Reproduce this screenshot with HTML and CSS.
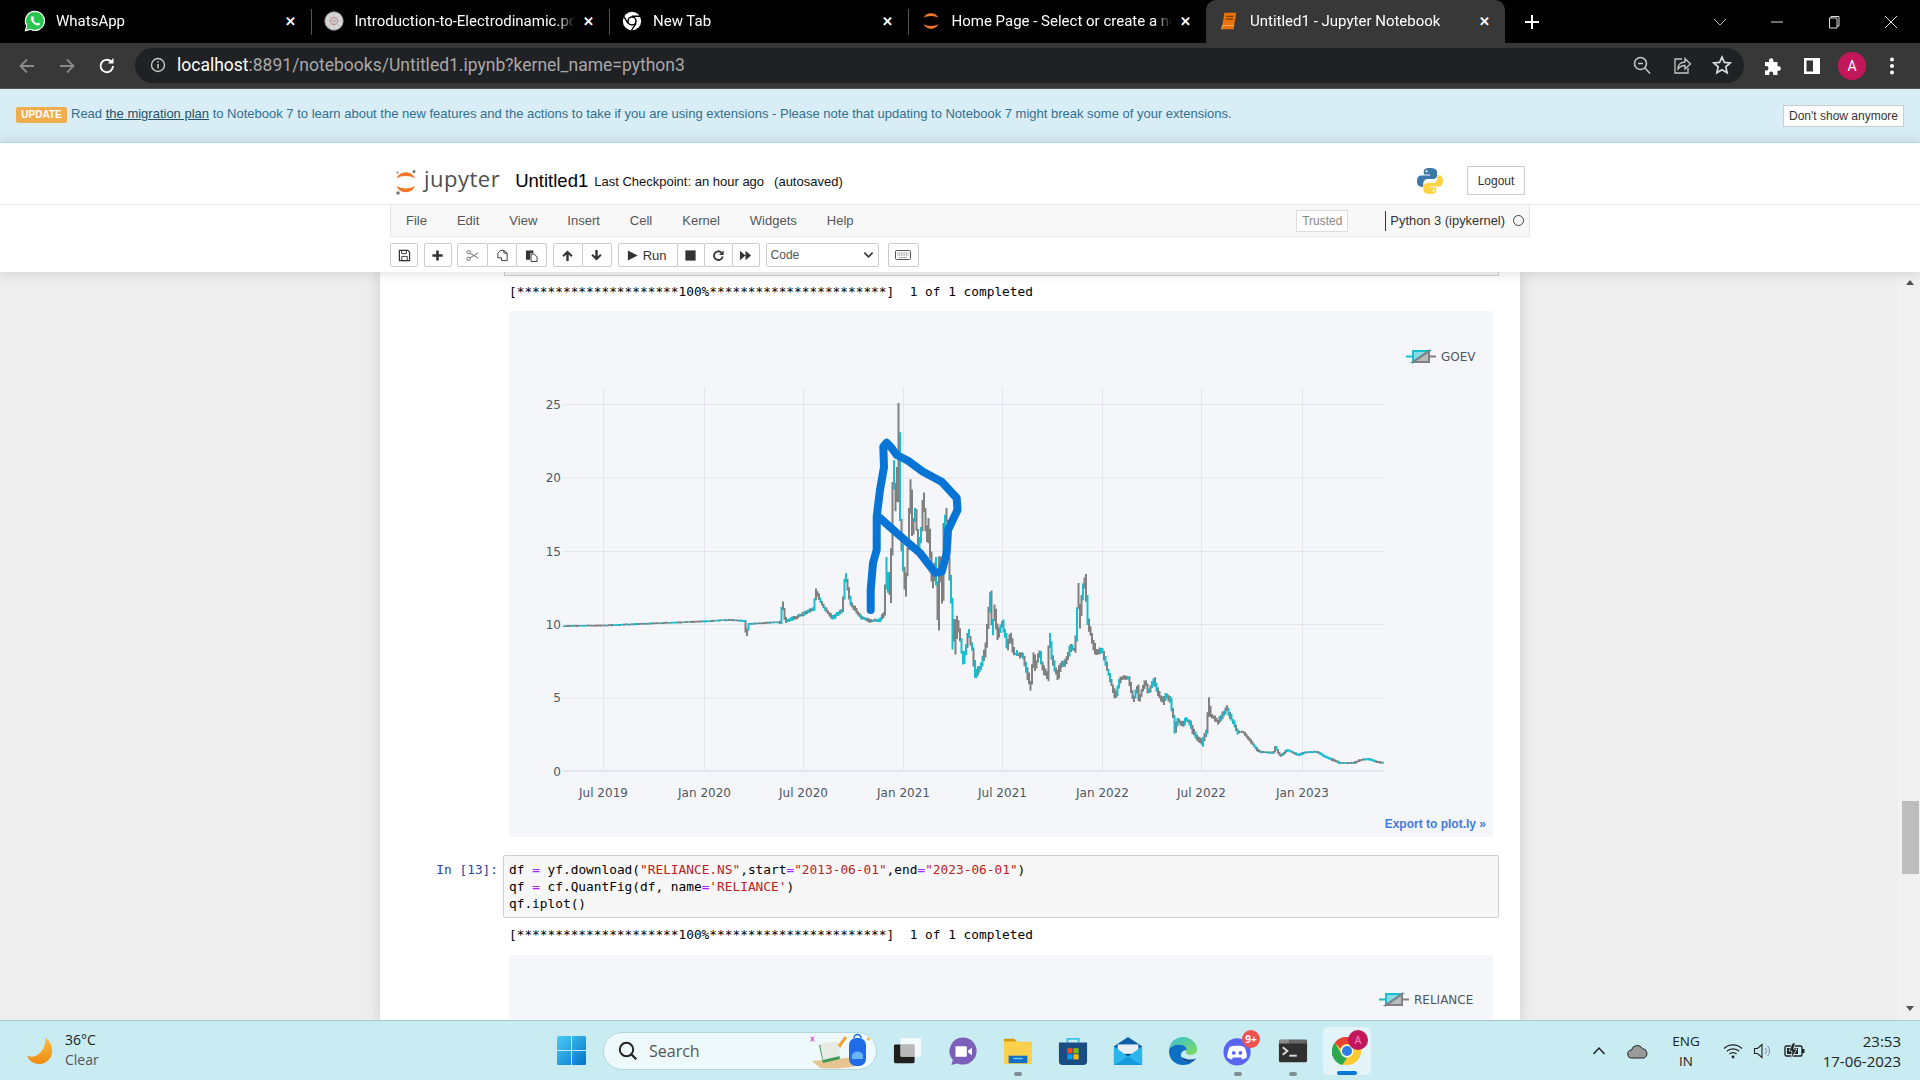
FILE: index.html
```html
<!DOCTYPE html>
<html lang="en">
<head>
  <meta charset="UTF-8" />
  <title>Untitled1 - Jupyter Notebook</title>
  <link rel="stylesheet" href="styles.css">
</head>
<body>
  <div class="tabstrip">
    <div class="tab">
      <svg class="tab-icon" viewBox="0 0 24 24"><path d="M12 1.5a10.4 10.4 0 0 0-9 15.6L1.6 22.500l5.500-1.400A10.400 10.400 0 1 0 12 1.500z" fill="#29c64f" stroke="#fff" stroke-width="1.300"/><path d="M8.800 6.800c-.5 0-1.300.8-1.400 2-.1 2.200 1.400 4.500 3.400 6.200 2 1.600 3.800 2.300 5 1.900 1-.3 1.800-1.300 1.700-2.100l-2.400-1.300-1.200 1.200c-1.500-.6-3-2-3.800-3.700l1-1.200-1-2.800z" fill="#fff"/></svg>
      <span class="tab-title">WhatsApp</span>
      <span class="tab-close">&#x2715;</span>
    </div>
    <div class="tab sep">
      <svg class="tab-icon" viewBox="0 0 24 24"><circle cx="12" cy="12" r="10" fill="#d8d8d8" stroke="#999"/><circle cx="12" cy="12" r="4" fill="none" stroke="#c77" stroke-width="1"/><path d="M12 4v16M4 12h16M6 6l12 12M18 6L6 18" stroke="#aaa" stroke-width=".6"/></svg>
      <span class="tab-title">Introduction-to-Electrodinamic.pdf</span>
      <span class="tab-close">&#x2715;</span>
    </div>
    <div class="tab sep">
      <svg class="tab-icon" viewBox="0 0 24 24"><circle cx="12" cy="12" r="10" fill="#fff"/><circle cx="12" cy="12" r="5.200" fill="#000"/><circle cx="12" cy="12" r="3.500" fill="#fff"/><path d="M12 6.800h9M7.500 14.600L3 7M16.500 14.600L11.500 22" stroke="#000" stroke-width="1.400"/></svg>
      <span class="tab-title">New Tab</span>
      <span class="tab-close">&#x2715;</span>
    </div>
    <div class="tab sep">
      <svg class="tab-icon" viewBox="0 0 24 24"><path d="M4 8.500a9 9 0 0 1 16 0a11 6 0 0 0-16 0zM4 15.500a9 9 0 0 0 16 0a11 6 0 0 1-16 0z" fill="#f37726"/></svg>
      <span class="tab-title">Home Page - Select or create a notebook</span>
      <span class="tab-close">&#x2715;</span>
    </div>
    <div class="tab active">
      <svg class="tab-icon" viewBox="0 0 24 24"><path d="M7 3h13l-3 18H4z" fill="#e8730c"/><path d="M9 7h8M8.500 10h8" stroke="#7a3c00" stroke-width="1.200"/><path d="M4 21l.8-4h12.500" fill="none" stroke="#ffb060" stroke-width="1"/></svg>
      <span class="tab-title">Untitled1 - Jupyter Notebook</span>
      <span class="tab-close">&#x2715;</span>
    </div>
    <svg class="new-tab" viewBox="0 0 16 16"><path d="M8 1v14M1 8h14" stroke="#fff" stroke-width="2"/></svg>
    <div class="window-controls">
      <svg viewBox="0 0 14 14"><path d="M1 4l6 6 6-6" fill="none" stroke="#bbb"/></svg>
      <svg viewBox="0 0 14 14"><path d="M1 7h12" stroke="#ddd" stroke-width="1"/></svg>
      <svg viewBox="0 0 14 14"><path d="M4 3V1.500h8V11h-2M2.500 3h7.500v10H2.500z" fill="none" stroke="#ddd"/></svg>
      <svg viewBox="0 0 14 14"><path d="M1 1l12 12M13 1L1 13" stroke="#ddd"/></svg>
    </div>
  </div>

  <div class="addressbar">
    <div class="nav-buttons">
      <svg viewBox="0 0 20 20"><path d="M17 10H4M10 3.500L3.500 10l6.500 6.500" fill="none" stroke="#8a8a8a" stroke-width="1.800"/></svg>
      <svg viewBox="0 0 20 20"><path d="M3 10h13M10 3.500l6.500 6.500-6.500 6.500" fill="none" stroke="#8a8a8a" stroke-width="1.800"/></svg>
      <svg viewBox="0 0 20 20"><path d="M16 10a6.200 6.200 0 1 1-1.800-4.400" fill="none" stroke="#fff" stroke-width="1.900"/><path d="M16.500 2v5.500H11z" fill="#fff"/></svg>
    </div>
    <div class="omnibox">
      <svg class="info" viewBox="0 0 16 16"><circle cx="8" cy="8" r="6.500" fill="none" stroke="#c4c7c5" stroke-width="1.400"/><path d="M8 7v4.500M8 4.300v1.500" stroke="#c4c7c5" stroke-width="1.500"/></svg>
      <span class="url"><b>localhost</b>:8891/notebooks/Untitled1.ipynb?kernel_name=python3</span>
      <div class="omni-actions">
        <svg viewBox="0 0 20 20"><circle cx="8.500" cy="8.500" r="6" fill="none" stroke="#c4c7c5" stroke-width="1.600"/><path d="M13 13l5 5.500M6 8.500h5" stroke="#c4c7c5" stroke-width="1.600"/></svg>
        <svg viewBox="0 0 20 20"><path d="M10 4H3v14h13v-5" fill="none" stroke="#c4c7c5" stroke-width="1.300"/><path d="M6 14c0-5 3-7 7-7V3.500l5.500 5.500-5.500 5v-3.500c-3 0-5 1-7 3.500z" fill="none" stroke="#c4c7c5" stroke-width="1.300"/></svg>
        <svg viewBox="0 0 20 20"><path d="M10 2l2.400 5.400 5.800.6-4.400 3.900 1.300 5.800-5.100-3-5.100 3 1.300-5.800L1.800 8l5.800-.6z" fill="none" stroke="#d8dadb" stroke-width="1.700"/></svg>
      </div>
    </div>
    <div class="browser-actions">
      <svg viewBox="0 0 20 20"><path d="M3 6h4V4.500a2.200 2.200 0 0 1 4.400 0V6h4.100v4.300h1.200a2.200 2.200 0 0 1 0 4.400h-1.200V19h-4.300v-1.500a2 2 0 0 0-4 0V19H3v-4.500h1.300a2.200 2.200 0 0 0 0-4.400H3z" fill="#fff"/></svg>
      <svg viewBox="0 0 20 20"><path d="M2 2h16v16H2z" fill="#fff"/><path d="M4.500 4.500h6.500v11H4.500z" fill="#333"/></svg>
      <span class="avatar">A</span>
      <svg viewBox="0 0 20 20"><circle cx="10" cy="3.500" r="2" fill="#fff"/><circle cx="10" cy="10" r="2" fill="#fff"/><circle cx="10" cy="16.500" r="2" fill="#fff"/></svg>
    </div>
  </div>

  <div class="update-banner">
    <span class="badge">UPDATE</span>
    <span class="banner-text">Read <a>the migration plan</a> to Notebook 7 to learn about the new features and the actions to take if you are using extensions - Please note that updating to Notebook 7 might break some of your extensions.</span>
    <button class="dismiss">Don't show anymore</button>
  </div>

  <div class="header">
    <div class="brand-row">
      <div class="brand-inner">
        <svg class="jp-mark" viewBox="0 0 24 30">
          <path d="M2.500 11.500a10 10 0 0 1 18.500 0a11.500 6 0 0 0-18.500 0zM2.500 19a10 10 0 0 0 18.500 0a11.500 6 0 0 1-18.500 0z" fill="#f37726"/>
          <circle cx="20" cy="4.500" r="1.500" fill="#767677"/><circle cx="3.500" cy="5.500" r="1" fill="#767677"/><circle cx="4" cy="26" r="1.800" fill="#767677"/>
        </svg>
        <span class="jp-word">jupyter</span>
        <span class="nb-name">Untitled1</span>
        <span class="checkpoint">Last Checkpoint: an hour ago</span>
        <span class="checkpoint saved">(autosaved)</span>
        <svg class="py-logo" viewBox="0 0 28 28">
          <path d="M13.800 1c-6 0-6 2.500-6 3.500V7.500h6.300v1H5C2.500 8.500 1 10.500 1 14c0 3.800 1.500 5.700 4 5.700h2.300v-3.200c0-2.500 2.200-4.500 4.500-4.500h5.700c2 0 3.500-1.600 3.500-3.500V4.500C20.500 2.500 18.500 1 13.800 1z" fill="#3b77a8"/>
          <path d="M14.200 27c6 0 6-2.500 6-3.500v-3h-6.300v-1H23c2.500 0 4-2 4-5.500 0-3.800-1.500-5.700-4-5.700h-1.800v3.200c0 2.500-2.200 4.500-4.500 4.500h-5.700c-2 0-3.500 1.600-3.500 3.500v4c0 2 2.500 3.500 6.700 3.500z" fill="#fdd445"/>
          <circle cx="10.500" cy="4.300" r="1.100" fill="#fff"/><circle cx="17.500" cy="23.700" r="1.100" fill="#fff"/>
        </svg>
        <button class="logout">Logout</button>
      </div>
    </div>
    <div class="menubar">
      <a>File</a><a>Edit</a><a>View</a><a>Insert</a><a>Cell</a><a>Kernel</a><a>Widgets</a><a>Help</a>
      <span class="trusted">Trusted</span>
      <span class="kernel-name">Python 3 (ipykernel)</span>
      <span class="kernel-dot"></span>
    </div>
    <div class="toolbar">
      <div class="btn-group"><button class="tool"><svg viewBox="0 0 14 14"><path d="M1.500 1.500h9l2 2v9h-11z" fill="none" stroke="#333" stroke-width="1.300"/><path d="M4 1.500h5v3.500H4zM4 8h6v4.500H4z" fill="none" stroke="#333"/></svg></button></div>
      <div class="btn-group"><button class="tool"><svg viewBox="0 0 14 14"><path d="M7 1.500v11M1.500 7h11" stroke="#333" stroke-width="2.800"/></svg></button></div>
      <div class="btn-group">
        <button class="tool wide"><svg viewBox="0 0 14 14"><circle cx="2.800" cy="3.500" r="1.800" fill="none" stroke="#666"/><circle cx="2.800" cy="10.500" r="1.800" fill="none" stroke="#666"/><path d="M4.300 4.500l9 5.500M4.300 9.500l9-5.500" stroke="#666"/></svg></button>
        <button class="tool wide"><svg viewBox="0 0 14 14"><path d="M5 1.500h3.500v3H12v8H6v-3H2V4.500z" fill="none" stroke="#333"/><path d="M8.500 1.500L12 4.500" stroke="#333"/></svg></button>
        <button class="tool wide"><svg viewBox="0 0 14 14"><path d="M1 1.500h8v3H5.500v7H1z" fill="#333"/><path d="M6.500 5.500H10l3 3v5H6.500z" fill="#fff" stroke="#333"/></svg></button>
      </div>
      <div class="btn-group">
        <button class="tool move"><svg viewBox="0 0 14 14"><path d="M7 1.500L1.500 7l1.500 1.500L5.700 6v7h2.600V6l2.700 2.500L12.500 7z" fill="#333"/></svg></button>
        <button class="tool move"><svg viewBox="0 0 14 14"><path d="M7 12.500L1.500 7 3 5.500 5.700 8V1h2.600v7L11 5.500 12.500 7z" fill="#333"/></svg></button>
      </div>
      <div class="btn-group">
        <button class="tool run"><svg viewBox="0 0 14 14"><path d="M2 1.500l10.500 5.500L2 12.500z" fill="#333"/></svg>Run</button>
        <button class="tool exec"><svg viewBox="0 0 14 14"><path d="M1.500 1.500h11v11h-11z" fill="#333"/></svg></button>
        <button class="tool exec"><svg viewBox="0 0 14 14"><path d="M11.500 8a4.700 4.700 0 1 1-1.300-4.200" fill="none" stroke="#333" stroke-width="1.900"/><path d="M12.500 1.500V6.500H7.500z" fill="#333"/></svg></button>
        <button class="tool exec"><svg viewBox="0 0 14 14"><path d="M1 2l6 5-6 5zM7 2l6 5-6 5z" fill="#333"/></svg></button>
      </div>
      <div class="cell-type">Code<svg viewBox="0 0 12 8"><path d="M1.500 1.500L6 6l4.500-4.500" fill="none" stroke="#333" stroke-width="1.800"/></svg></div>
      <button class="tool keyboard"><svg viewBox="0 0 16 12"><rect x=".5" y="1.500" width="15" height="9" rx="1" fill="none" stroke="#555"/><path d="M2.500 4h11M2.500 6h11M4 8.500h8" stroke="#777" stroke-dasharray="1 .7"/></svg></button>
    </div>
  </div>

  <div class="site">
    <div class="notebook">
      <div class="cell-tail"></div>
      <pre class="stream">[*********************100%***********************]  1 of 1 completed</pre>
      <div class="plot">
        <svg id="chart" class="plot-svg" viewBox="509 311 984 526" width="984" height="526">
          <g class="grid">
            <path d="M563 404.500H1384M563 478H1384M563 551.500H1384M563 624.500H1384M563 698H1384"/>
            <path d="M603.500 387V771M704.500 387V771M803.500 387V771M903.500 387V771M1002.500 387V771M1102.500 387V771M1201.500 387V771M1302.500 387V771"/>
            <path class="zero" d="M563 771H1384"/>
          </g>
          <path id="candlesGray" class="candles gray"/>
          <path id="candlesTeal" class="candles teal"/>
          <g class="ticks y">
            <text x="561" y="408.500">25</text><text x="561" y="482">20</text><text x="561" y="555.500">15</text><text x="561" y="628.500">10</text><text x="561" y="702">5</text><text x="561" y="775.500">0</text>
          </g>
          <g class="ticks x">
            <text x="603.500" y="797">Jul 2019</text><text x="704.500" y="797">Jan 2020</text><text x="803.500" y="797">Jul 2020</text><text x="903.500" y="797">Jan 2021</text><text x="1002.500" y="797">Jul 2021</text><text x="1102.500" y="797">Jan 2022</text><text x="1201.500" y="797">Jul 2022</text><text x="1302.500" y="797">Jan 2023</text>
          </g>
          <g class="legend-key" transform="translate(1406 350)">
            <path class="up-line" d="M0 6.500h7"/><path class="down-line" d="M23 6.500h7"/>
            <path class="up-fill" d="M7 1h16L7 12z"/><path class="down-fill" d="M23 1v11H7z"/>
          </g>
          <text class="legend-label" x="1441" y="360.500">GOEV</text>
          <text class="export" x="1486" y="828">Export to plot.ly »</text>
          <path class="ink" d="M870.700 610L870.700 590L873 563L876.700 550L876.700 516.700L880 490L884 467L883.300 446.700L886.700 442.700L891.700 448L896.700 455L908 460.700L923 471.700L941.700 481.700L956.700 498L957.500 510L948 530L946.700 553L941.700 571.700L935 572.700L920 553L896.700 533L880 518"/>
        </svg>
      </div>
      <div class="code-cell">
        <div class="prompt">In [13]:</div>
        <pre class="code"><span class="nm">df</span> <span class="op">=</span> yf.download(<span class="str">"RELIANCE.NS"</span>,start<span class="op">=</span><span class="str">"2013-06-01"</span>,end<span class="op">=</span><span class="str">"2023-06-01"</span>)
qf <span class="op">=</span> cf.QuantFig(df, name<span class="op">=</span><span class="str">'RELIANCE'</span>)
qf.iplot()</pre>
      </div>
      <pre class="stream second">[*********************100%***********************]  1 of 1 completed</pre>
      <div class="plot short">
        <svg class="plot-svg" viewBox="509 955 984 66" width="984" height="66">
          <g class="legend-key" transform="translate(1379 993)">
            <path class="up-line" d="M0 6.500h7"/><path class="down-line" d="M23 6.500h7"/>
            <path class="up-fill" d="M7 1h16L7 12z"/><path class="down-fill" d="M23 1v11H7z"/>
          </g>
          <text class="legend-label" x="1414" y="1003.500">RELIANCE</text>
        </svg>
      </div>
    </div>
    <div class="scrollbar">
      <span class="arrow up"></span>
      <span class="thumb"></span>
      <span class="arrow down"></span>
    </div>
  </div>

  <div class="taskbar">
    <div class="weather">
      <svg class="moon" viewBox="0 0 30 32"><defs><linearGradient id="moonFill" x1="0" y1="0" x2="0" y2="1"><stop offset="0" stop-color="#fbbf3a"/><stop offset="1" stop-color="#ee8a12"/></linearGradient></defs><path d="M20 2c4 4 7 8 7 14 0 8-6 14-13 14-6 0-11-3-13-9 3 2 7 2 10 0 6-3 10-11 9-19z" fill="url(#moonFill)"/></svg>
      <div class="weather-text"><span class="temp">36°C</span><span class="cond">Clear</span></div>
    </div>
    <svg class="start" viewBox="0 0 29 29"><defs><linearGradient id="winFill" x1="0" y1="0" x2="1" y2="1"><stop offset="0" stop-color="#4bcdf6"/><stop offset="1" stop-color="#0372c9"/></linearGradient></defs><path d="M0 1.500A1.500 1.500 0 0 1 1.500 0H14v14H0zM15 0h12.500A1.500 1.500 0 0 1 29 1.500V14H15zM0 15h14v14H1.500A1.500 1.500 0 0 1 0 27.500zM15 15h14v12.500a1.500 1.500 0 0 1-1.500 1.500H15z" fill="url(#winFill)"/></svg>
    <div class="searchbox">
      <svg viewBox="0 0 20 20"><circle cx="8.500" cy="8.500" r="6.700" fill="none" stroke="#222" stroke-width="2"/><path d="M13.300 13.300l5 5" stroke="#222" stroke-width="2.200"/></svg>
      <span>Search</span>
      <svg class="search-art" viewBox="0 0 60 36"><path d="M2 28l46-4 6 6c-10 6-36 6-44 5z" fill="#e6c492"/><path d="M9 12l18-3 3 17-17 4z" fill="#3d9a55"/><path d="M10 11l17-3 3 15-17 4z" fill="#e8ebe4"/><path d="M28 12l7-9 2 2-7 10z" fill="#f0a030"/><path d="M0 3l2.500 1.500L5 3 3.500 6 5 9 2.500 7.500 0 9 1.500 6z" fill="#d65fe6"/><rect x="39" y="5" width="17" height="28" rx="7" fill="#1f6be8"/><path d="M42 22a6 6 0 0 1 11 0v4H42z" fill="#69b5f5"/><path d="M44 5a3.500 3.500 0 0 1 7 0" fill="none" stroke="#1f6be8" stroke-width="1.500"/><circle cx="58.500" cy="6" r="1.500" fill="#f5b022"/></svg>
    </div>
    <div class="apps">
      <div class="app"><svg viewBox="0 0 32 32"><rect x="1" y="9" width="22" height="20" rx="1.500" fill="#1f1f1f"/><rect x="8" y="2" width="22" height="20" rx="1.500" fill="#fff" fill-opacity=".75"/><rect x="8" y="9" width="15" height="13" fill="#b9b9b9"/></svg></div>
      <div class="app"><svg viewBox="0 0 32 32"><path d="M16 1.500a14.500 14.500 0 1 1-6 27.700L3.500 31l1.700-5.500A14.500 14.500 0 0 1 16 1.500z" fill="#7b5fb8"/><path d="M8 11h11a1 1 0 0 1 1 1v9a1 1 0 0 1-1 1H8z" fill="#fff"/><path d="M21.500 15.500l4-3v8l-4-3z" fill="#fff"/></svg></div>
      <div class="app open"><svg viewBox="0 0 32 32"><path d="M1 3h11l3 3h-14z" fill="#d99a00"/><path d="M1 6h30v24H1z" fill="#fbd04d"/><path d="M6 21h20v8H6z" fill="#0e6fc4" rx="1"/><path d="M11 24h10" stroke="#7fc4f0" stroke-width="1.500"/></svg></div>
      <div class="app"><svg viewBox="0 0 32 32"><path d="M10 7V3h12v4" fill="none" stroke="#3cc2e8" stroke-width="2"/><path d="M1 7h30v20a4 4 0 0 1-4 4H5a4 4 0 0 1-4-4z" fill="#174d82"/><path d="M10 13h5.500v5.500H10z" fill="#f25022"/><path d="M16.500 13H22v5.500h-5.500z" fill="#7fba00"/><path d="M10 19.500h5.500V25H10z" fill="#00a4ef"/><path d="M16.500 19.500H22V25h-5.500z" fill="#ffb900"/></svg></div>
      <div class="app"><svg viewBox="0 0 32 32"><path d="M1 11L16 1l15 10v20H1z" fill="#0e5fa8"/><path d="M5 9h22v10H5z" fill="#e8eef2"/><path d="M1 11l15 11 15-11v20H1z" fill="#2cb6ee"/><path d="M1 31l15-9 15 9z" fill="#159ade"/></svg></div>
      <div class="app"><svg viewBox="0 0 32 32"><defs><linearGradient id="edgeTop" x1="0" y1="0" x2="1" y2="1"><stop offset="0" stop-color="#36c0d8"/><stop offset="1" stop-color="#7fdc5a"/></linearGradient></defs><path d="M1 16C1 7 8 1 16 1c8 0 15 6 15 13 0 4-3 6-7 6-3 0-5-1-5-3 2-4-1-8-6-8-6 0-12 3-12 7z" fill="url(#edgeTop)"/><path d="M1 16c0-4 6-7 11-7 5 0 8 3 8 6-4 0-7 3-6 7 1 4 6 7 13 5-3 3-7 4-11 4C8 31 1 25 1 16z" fill="#0c6fc4"/><path d="M14 22c1 4 6 7 13 5 1-1 2-2 3-3-6 2-11 1-16-2z" fill="#0b4f96"/></svg></div>
      <div class="app open"><svg viewBox="0 0 32 32"><circle cx="15" cy="17" r="14.500" fill="#5865f2"/><path d="M7 12c3-2 13-2 16 0 2 4 2.500 8 2.500 11-2 1-3.500 2-5 2l-1-2h-9l-1 2c-1.500 0-3-1-5-2 0-3 .5-7 2.500-11z" fill="#fff"/><circle cx="11.500" cy="18" r="2" fill="#5865f2"/><circle cx="18.500" cy="18" r="2" fill="#5865f2"/></svg><span class="notif">9+</span></div>
      <div class="app open"><svg viewBox="0 0 32 28"><rect x="1" y="2" width="30" height="24" rx="2" fill="#303030"/><path d="M1 4a2 2 0 0 1 2-2h9v4H1z" fill="#8a8a8a"/><path d="M12 2h19v4H12z" fill="#666"/><path d="M5 10l5 4-5 4" fill="none" stroke="#ddd" stroke-width="2"/><path d="M12 19h8" stroke="#ddd" stroke-width="2"/></svg></div>
      <div class="app current"><svg viewBox="0 0 32 32"><circle cx="16" cy="16" r="15" fill="#ffc92f"/><path d="M16 1a15 15 0 0 1 13 7.500H16a7.500 7.500 0 0 0-7 4.700L3 7A15 15 0 0 1 16 1z" fill="#e84235"/><path d="M3 7l6.500 11.500a7.500 7.500 0 0 0 6.500 5L11 31A15 15 0 0 1 3 7z" fill="#2fa750"/><circle cx="16" cy="16" r="6.800" fill="#fff"/><circle cx="16" cy="16" r="5.400" fill="#2c7de6"/></svg><span class="profile-badge">A</span></div>
    </div>
    <div class="tray">
      <svg class="caret" viewBox="0 0 14 10"><path d="M1.500 8L7 2l5.500 6" fill="none" stroke="#222" stroke-width="1.500"/></svg>
      <svg class="cloud" viewBox="0 0 22 16"><path d="M5 15a4 4 0 0 1-.5-8 6 6 0 0 1 11-1.500A5 5 0 0 1 17 15z" fill="#9a9a9a" stroke="#222"/></svg>
      <div class="lang"><span>ENG</span><span>IN</span></div>
      <svg class="wifi" viewBox="0 0 20 16"><path d="M1 5.500a13 13 0 0 1 18 0M3.800 8.300a9 9 0 0 1 12.400 0M6.500 11a5 5 0 0 1 7 0" fill="none" stroke="#222" stroke-width="1.200"/><circle cx="10" cy="14" r="1.400" fill="#222"/></svg>
      <svg class="volume" viewBox="0 0 20 18"><path d="M1.500 6.500h3L9 2.500v13l-4.500-4h-3z" fill="none" stroke="#222" stroke-width="1.100"/><path d="M12 6a4 4 0 0 1 0 6M14.500 4a7 7 0 0 1 0 10" fill="none" stroke="#88a" stroke-width="1"/></svg>
      <svg class="battery" viewBox="0 0 22 16"><rect x="1" y="3" width="17" height="10" rx="1.500" fill="none" stroke="#222" stroke-width="1.400"/><rect x="3" y="5" width="11" height="6" fill="#222"/><path d="M18 6h2.500v4H18z" fill="#222"/><path d="M8.500 0L5 8h3l-1 8 6-10H9.500l2-6z" fill="#222" stroke="#c9eaf1" stroke-width=".8"/></svg>
      <div class="clock"><span>23:53</span><span>17-06-2023</span></div>
    </div>
  </div>
  <script src="chart.js"></script>
</body>
</html>
```

FILE: styles.css
```css
* {
  box-sizing: border-box;
}

html, body {
  margin: 0;
  height: 100%;
}

body {
  width: 1920px;
  height: 1080px;
  overflow: hidden;
  display: flex;
  flex-direction: column;
  font-family: "Liberation Sans", Arial, sans-serif;
  background: #eee;
}

button {
  font-family: inherit;
}

/* browser chrome */
.tabstrip {
  height: 43px;
  background: #000;
  display: flex;
  align-items: center;
  padding-left: 12px;
  font-family: Roboto, "Noto Sans", sans-serif;
  color: #fff;
}

.tab {
  width: 298.500px;
  height: 43px;
  flex: none;
  display: flex;
  align-items: center;
  padding: 0 0 1px 12px;
  font-size: 15px;
}

.tab.sep {
  position: relative;
}

.tab.sep::before {
  content: "";
  position: absolute;
  left: 0;
  top: 9px;
  height: 26px;
  width: 1px;
  background: #555;
}

.tab.active {
  background: #383838;
  border-radius: 10px 10px 0 0;
  height: 43px;
}

.tab-icon {
  width: 22px;
  height: 22px;
  flex: none;
}

.tab-title {
  width: 220px;
  margin-left: 10px;
  white-space: nowrap;
  overflow: hidden;
  -webkit-mask-image: linear-gradient(to right, #000 92%, transparent);
  mask-image: linear-gradient(to right, #000 92%, transparent);
}

.tab-close {
  width: 16px;
  margin-left: 6px;
  font-size: 13px;
  font-weight: bold;
  text-align: center;
}

.new-tab {
  width: 16px;
  height: 16px;
  margin-left: 19px;
}

.window-controls {
  margin-left: auto;
  margin-right: 22px;
  display: flex;
  gap: 43px;
}

.window-controls svg {
  width: 14px;
  height: 14px;
}

.addressbar {
  height: 46px;
  background: #383838;
  border-bottom: 1px solid #555;
  display: flex;
  align-items: center;
  padding: 0 14px 0 17px;
}

.nav-buttons {
  display: flex;
  gap: 20px;
  width: 118px;
}

.nav-buttons svg {
  width: 20px;
  height: 20px;
}

.omnibox {
  width: 1609px;
  height: 35px;
  margin-top: -1px;
  background: #202124;
  border-radius: 18px;
  display: flex;
  align-items: center;
  padding: 0 12px 0 15px;
}

.info {
  width: 16px;
  height: 16px;
}

.url {
  margin-left: 11px;
  font-family: Roboto, "Noto Sans", sans-serif;
  font-size: 17.500px;
  color: #a8a8a8;
  white-space: nowrap;
}

.url b {
  font-weight: normal;
  color: #fff;
}

.omni-actions {
  margin-left: auto;
  display: flex;
  gap: 20px;
}

.omni-actions svg {
  width: 20px;
  height: 20px;
}

.browser-actions {
  margin-left: 18px;
  display: flex;
  align-items: center;
  gap: 20px;
}

.browser-actions svg {
  width: 20px;
  height: 20px;
}

.avatar {
  width: 28px;
  height: 28px;
  margin: 0 -4px;
  border-radius: 50%;
  background: #c2185b;
  color: #fff;
  font: 14px Roboto, sans-serif;
  display: flex;
  align-items: center;
  justify-content: center;
}

/* notebook 7 banner */
.update-banner {
  height: 54px;
  background: #d9edf7;
  border-bottom: 1px solid #bce8f1;
  display: flex;
  align-items: flex-start;
  padding: 18px 16px 0;
  font-size: 13px;
  color: #31708f;
}

.badge {
  width: 51px;
  height: 16px;
  background: #f0ad4e;
  color: #fff;
  font-size: 10px;
  font-weight: bold;
  text-align: center;
  line-height: 16px;
  border-radius: 2px;
  flex: none;
}

.banner-text {
  margin: -1px 0 0 4px;
  line-height: 15px;
}

.banner-text a {
  color: #245269;
  text-decoration: underline;
}

.dismiss {
  margin-left: auto;
  margin-top: -2px;
  width: 121px;
  height: 22px;
  background: #fff;
  border: 1px solid #ccc;
  font-size: 12px;
  color: #333;
  padding: 0;
}

/* jupyter header */
.header {
  position: relative;
  z-index: 2;
  background: #fff;
  box-shadow: 0 0 12px 1px rgba(87, 87, 87, 0.2);
}

.brand-row {
  height: 62px;
  border-bottom: 1px solid #e7e7e7;
}

.brand-inner {
  width: 1140px;
  margin-left: 390px;
  height: 61px;
  padding-top: 14px;
  display: flex;
  align-items: center;
}

.jp-mark {
  width: 24px;
  height: 30px;
  margin: 2px 0 0 4px;
}

.jp-word {
  margin-left: 6px;
  font-family: "Open Sans", sans-serif;
  font-size: 22px;
  letter-spacing: 0.500px;
  color: #4e4e4e;
  margin-top: -6px;
}

.nb-name {
  margin-left: 15px;
  font-size: 18.500px;
  color: #000;
}

.checkpoint {
  margin-left: 6px;
  margin-top: 2px;
  font-size: 13px;
  color: #111;
}

.checkpoint.saved {
  margin-left: 10px;
}

.py-logo {
  width: 28px;
  height: 28px;
  margin-left: auto;
}

.logout {
  width: 58px;
  height: 29px;
  margin: 0 5px 0 23px;
  background: #fff;
  border: 1px solid #ccc;
  font-size: 12px;
  color: #333;
  padding: 0;
}

.menubar {
  width: 1140px;
  height: 32px;
  margin-left: 390px;
  background: #f8f8f8;
  border: 1px solid #e7e7e7;
  border-top: 0;
  display: flex;
  align-items: center;
  font-size: 13px;
  color: #555;
}

.menubar a {
  padding: 0 15px;
}

.trusted {
  margin-left: auto;
  width: 52px;
  height: 22px;
  border: 1px solid #ddd;
  background: #fff;
  color: #888;
  font-size: 12px;
  line-height: 20px;
  text-align: center;
}

.kernel-name {
  margin-left: 37px;
  height: 20px;
  border-left: 1px solid #333;
  padding-left: 4px;
  font-size: 12.900px;
  line-height: 19px;
  color: #333;
}

.kernel-dot {
  width: 11px;
  height: 11px;
  margin: 0 5px 0 8px;
  border: 1.500px solid #444;
  border-radius: 50%;
}

.toolbar {
  width: 1140px;
  height: 35px;
  margin-left: 390px;
  padding-top: 6px;
  display: flex;
  align-items: flex-start;
  gap: 5.500px;
}

.btn-group {
  display: flex;
}

.tool {
  width: 28px;
  height: 24px;
  background: #fff;
  border: 1px solid #ccc;
  border-radius: 2px;
  padding: 0;
  font-size: 13px;
  color: #333;
  display: flex;
  align-items: center;
  justify-content: center;
}

.tool svg {
  width: 13px;
  height: 13px;
}

.btn-group .tool + .tool {
  margin-left: -1px;
}

.tool.wide {
  width: 30.700px;
}

.tool.move {
  width: 30.250px;
}

.tool.exec {
  width: 28.500px;
}

.tool.run {
  width: 60px;
  gap: 4px;
  padding-right: 3px;
}

.cell-type {
  width: 113px;
  height: 24px;
  border: 1px solid #ccc;
  border-radius: 2px;
  background: #fff;
  padding: 0 4px;
  font-size: 12px;
  color: #555;
  display: flex;
  align-items: center;
  justify-content: space-between;
}

.cell-type svg {
  width: 11px;
  height: 8px;
}

.tool.keyboard {
  width: 31px;
  margin-left: 3.500px;
}

.tool.keyboard svg {
  width: 16px;
  height: 12px;
}

/* notebook area */
.site {
  position: relative;
  z-index: 1;
  flex: 1;
  min-height: 0;
  display: flex;
  justify-content: flex-end;
  overflow: hidden;
}

.notebook {
  width: 1140px;
  margin-right: 400px;
  background: #fff;
  box-shadow: 0 0 12px 1px rgba(87, 87, 87, 0.2);
  padding-left: 129px;
  overflow: hidden;
}

.cell-tail {
  width: 995px;
  height: 4px;
  margin-left: -5px;
  background: #f7f7f7;
  border: 1px solid #cfcfcf;
  border-top: 0;
}

pre {
  margin: 0;
  font-family: "DejaVu Sans Mono", monospace;
  font-size: 12.800px;
  line-height: 17px;
}

.stream {
  margin-top: 7px;
  color: #000;
}

.plot {
  width: 984px;
  height: 526px;
  margin-top: 11px;
  background: #f5f6f9;
}

.plot.short {
  height: 66px;
  margin-top: 12px;
}

.plot-svg {
  display: block;
}

.grid path {
  fill: none;
  stroke: #e1e5ed;
  stroke-width: 1;
}

.grid .zero {
  stroke-width: 2;
}

.candles {
  fill: none;
  stroke-width: 2;
}

.candles.gray {
  stroke: #808080;
}

.candles.teal {
  stroke: #17becf;
}

.ticks text {
  font-family: "DejaVu Sans", sans-serif;
  font-size: 12px;
  fill: #4d5663;
}

.ticks.y text {
  text-anchor: end;
}

.ticks.x text {
  text-anchor: middle;
}

.legend-label {
  font-family: "DejaVu Sans", sans-serif;
  font-size: 12px;
  fill: #4d5663;
}

.legend-key .up-line {
  stroke: #17becf;
  stroke-width: 2;
}

.legend-key .down-line {
  stroke: #808080;
  stroke-width: 2;
}

.legend-key .up-fill {
  fill: #17becf;
  fill-opacity: 0.5;
  stroke: #17becf;
  stroke-width: 2;
}

.legend-key .down-fill {
  fill: #808080;
  fill-opacity: 0.5;
  stroke: #808080;
  stroke-width: 2;
}

.export {
  font-size: 12px;
  font-weight: bold;
  fill: #447adb;
  text-anchor: end;
}

.ink {
  fill: none;
  stroke: #0875d6;
  stroke-width: 8;
  stroke-linecap: round;
  stroke-linejoin: round;
}

.code-cell {
  display: flex;
  margin: 18px 0 0 -129px;
}

.prompt {
  width: 123px;
  padding: 6px 5px 0 0;
  text-align: right;
  font-family: "DejaVu Sans Mono", monospace;
  font-size: 12.800px;
  line-height: 17px;
  color: #303f9f;
}

.code {
  width: 996px;
  height: 63px;
  padding: 5px 5px;
  background: #f7f7f7;
  border: 1px solid #cfcfcf;
  border-radius: 2px;
  color: #000;
}

.code .op {
  color: #aa22ff;
}

.code .str {
  color: #ba2121;
}

.stream.second {
  margin-top: 8px;
}

.scrollbar {
  position: absolute;
  right: 0;
  top: 0;
  bottom: 0;
  width: 22px;
  background: #f0f0f0;
  display: flex;
  flex-direction: column;
  align-items: center;
  padding-left: 2px;
}

.arrow {
  width: 0;
  height: 0;
  border-left: 4.500px solid transparent;
  border-right: 4.500px solid transparent;
}

.arrow.up {
  margin-top: 8px;
  border-bottom: 5px solid #505050;
}

.arrow.down {
  margin-top: 132px;
  border-top: 5px solid #505050;
}

.thumb {
  width: 17px;
  height: 73px;
  margin-top: 516px;
  background: #bdbdbd;
}

/* windows taskbar */
.taskbar {
  height: 60px;
  flex: none;
  position: relative;
  z-index: 3;
  background: #c9ebf2;
  border-top: 1px solid #a8c6cc;
  display: flex;
  align-items: center;
  font-family: "Open Sans", sans-serif;
  color: #222;
}

.weather {
  width: 557px;
  flex: none;
  display: flex;
  align-items: center;
  padding-left: 24px;
}

.moon {
  width: 33px;
  height: 31px;
}

.weather-text {
  margin: -2px 0 0 8px;
  display: flex;
  flex-direction: column;
  font-size: 14px;
  line-height: 20px;
}

.cond {
  color: #555;
}

.start {
  width: 29px;
  height: 29px;
  flex: none;
}

.searchbox {
  width: 274px;
  height: 38px;
  margin-left: 17px;
  flex: none;
  border-radius: 19px;
  background: #eef9fc;
  border: 1px solid #b4d5dc;
  display: flex;
  align-items: center;
  padding-left: 14px;
  font-size: 16px;
  color: #555;
}

.searchbox svg {
  width: 20px;
  height: 20px;
  flex: none;
}

.searchbox span {
  margin-left: 11px;
}

.searchbox .search-art {
  width: 60px;
  height: 36px;
  margin-left: auto;
  margin-right: 6px;
}

.apps {
  margin-left: 3px;
  display: flex;
  flex: none;
}

.app {
  width: 55px;
  height: 48px;
  position: relative;
  display: flex;
  align-items: center;
  justify-content: center;
}

.app svg {
  width: 30px;
  height: 30px;
}

.app.open::after,
.app.current::after {
  content: "";
  position: absolute;
  left: 50%;
  bottom: -1px;
  width: 8px;
  height: 4px;
  margin-left: -4px;
  border-radius: 2px;
  background: #7f8f94;
}

.app.current {
  width: 48px;
  margin-left: 3px;
  border-radius: 5px;
  background: #e2f4f8;
}

.app.current::after {
  width: 20px;
  margin-left: -10px;
  background: #0078d4;
  bottom: 0;
}

.notif {
  position: absolute;
  top: 3px;
  right: 5px;
  width: 18px;
  height: 18px;
  border-radius: 50%;
  background: #ef5350;
  color: #fff;
  font-size: 10px;
  font-weight: bold;
  text-align: center;
  line-height: 18px;
}

.profile-badge {
  position: absolute;
  top: 3px;
  right: 3px;
  width: 20px;
  height: 20px;
  border-radius: 50%;
  background: #c2185b;
  color: #f8c;
  font-size: 11px;
  text-align: center;
  line-height: 20px;
}

.tray {
  flex: 1;
  display: flex;
  align-items: center;
  padding-left: 221px;
}

.caret {
  width: 14px;
  height: 10px;
}

.cloud {
  width: 22px;
  height: 16px;
  margin-left: 21px;
}

.lang {
  width: 36px;
  margin-left: 19px;
  display: flex;
  flex-direction: column;
  align-items: center;
  font-size: 13.500px;
  line-height: 20px;
}

.wifi {
  width: 20px;
  height: 16px;
  margin-left: 19px;
}

.volume {
  width: 20px;
  height: 18px;
  margin-left: 10px;
}

.battery {
  width: 22px;
  height: 16px;
  margin-left: 11px;
}

.clock {
  margin-left: auto;
  margin-right: 19px;
  display: flex;
  flex-direction: column;
  align-items: flex-end;
  font-size: 15px;
  line-height: 20px;
}
```

FILE: chart.js
```js
// price outline of the candles in page pixels, [x, y]
const keys = [
  [563,626],[603,625.500],[650,623.500],[700,621.500],[730,620],[744,621],[746,635],[748,624],[780,622],[782,603],[785,621],
  [797,617],[810,610],[814,609],[815,590],[823,607],[832,618],[842,610],[845,575],[850,603],[860,617],[870,621],[880,620],
  [884,612],[886,560],[887,590],[888,573],[890,600],[892,503],[893,463],[895,510],[896,470],[897,500],[898,407],[900,520],
  [902,557],[905,593],[908,540],[910,480],[912,533],[915,510],[918,550],[921,530],[923,495],[925,525],[927,540],[928,522],
  [932,587],[935,560],[938,628],[939,557],[942,600],[943,530],[946,510],[948,557],[951,600],[952,647],[954,620],[955,653],
  [956,617],[960,640],[963,663],[968,633],[972,650],[975,675],[980,667],[985,650],[990,593],[992,633],[994,607],[997,637],
  [1002,622],[1007,647],[1010,635],[1013,653],[1023,657],[1030,687],[1033,655],[1035,667],[1039,652],[1042,668],[1047,678],
  [1049,637],[1052,660],[1057,677],[1060,665],[1065,663],[1070,647],[1075,650],[1078,587],[1079,627],[1082,590],[1085,576],
  [1087,620],[1090,633],[1095,652],[1102,650],[1107,670],[1115,697],[1120,678],[1128,678],[1133,700],[1137,687],[1138,700],
  [1145,682],[1148,692],[1154,680],[1157,692],[1163,702],[1165,695],[1170,700],[1173,717],[1174,733],[1177,720],[1182,725],
  [1185,720],[1189,722],[1193,733],[1202,744],[1205,732],[1207,732],[1208,698],[1210,715],[1218,722],[1226,708],[1233,723],
  [1237,732],[1243,732],[1257,750],[1260,752],[1273,753],[1275,747],[1280,756],[1287,750],[1298,755],[1303,753],[1308,752],
  [1317,752],[1325,757],[1340,763],[1353,763],[1360,760],[1368,759],[1377,762],[1384,763]
];

let seed = 7;
function rand() {
  seed = (seed * 16807) % 2147483647;
  return seed / 2147483647;
}

function priceAt(x) {
  for (let i = 1; i < keys.length; i++) {
    if (x <= keys[i][0]) {
      const [x0, y0] = keys[i - 1];
      const [x1, y1] = keys[i];
      return y0 + (y1 - y0) * (x - x0) / (x1 - x0);
    }
  }
  return keys[keys.length - 1][1];
}

function noiseAt(x) {
  if (x < 780) return 0.5;
  if (x < 885) return 1.5;
  if (x < 1100) return 3.5;
  if (x < 1240) return 2.5;
  return 0.6;
}

let gray = '';
let teal = '';
let isTeal = false;
const step = 1.500;
for (let x = 564; x < 1384; x += step) {
  const ys = [priceAt(x - step), priceAt(x)];
  // keep spikes that fall between two candles
  keys.forEach(k => {
    if (k[0] > x - step && k[0] <= x) ys.push(k[1]);
  });
  const n = noiseAt(x);
  const top = Math.min(...ys) - 0.6 - rand() * n;
  const bottom = Math.max(...ys) + 0.6 + rand() * n;
  const seg = `M${x.toFixed(1)} ${top.toFixed(1)}V${bottom.toFixed(1)}`;
  // short runs of one colour, gray a bit more often
  if (rand() < (isTeal ? 0.6 : 0.35)) isTeal = !isTeal;
  if (isTeal) {
    teal += seg;
  } else {
    gray += seg;
  }
}
document.getElementById('candlesGray').setAttribute('d', gray);
document.getElementById('candlesTeal').setAttribute('d', teal);
```
